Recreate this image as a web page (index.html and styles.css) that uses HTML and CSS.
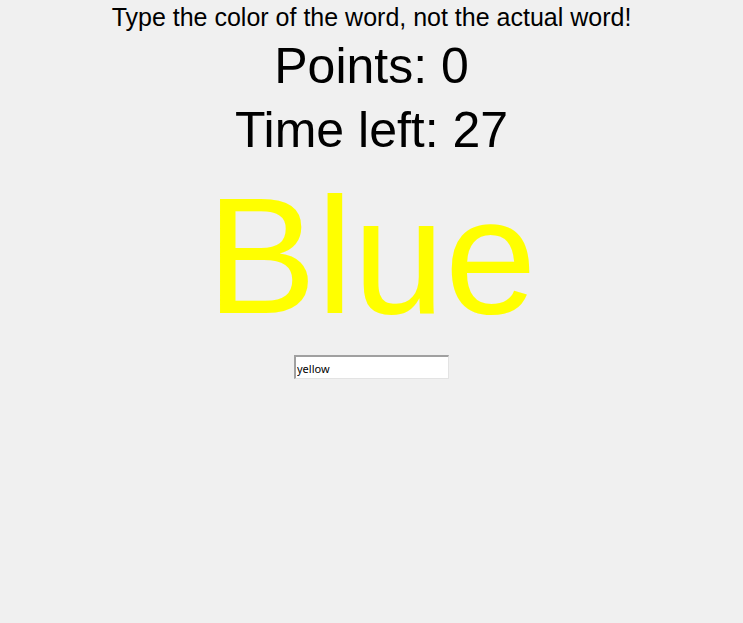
FILE: index.html
```
<!DOCTYPE html>
<html>
<head>
<meta charset="utf-8">
<link rel="stylesheet" href="styles.css">
</head>
<body>
<div class="app">
  <div class="instructions">Type the color of the word, not the actual word!</div>
  <div class="score">Points: 0</div>
  <div class="timer">Time left: 27</div>
  <div class="word">Blue</div>
  <div class="entry-row"><input class="entry" type="text" value="yellow"></div>
</div>
</body>
</html>
```
FILE: styles.css
```
html, body {
  margin: 0;
  padding: 0;
  background: #f0f0f0;
}
.app {
  display: flex;
  flex-direction: column;
  align-items: center;
  width: 743px;
  height: 623px;
  font-family: "Liberation Sans", Arial, sans-serif;
  color: #000;
}
.instructions {
  font-size: 25px;
  line-height: 28px;
  margin-top: 3px;
}
.score {
  font-size: 50px;
  line-height: 58px;
  margin-top: 6px;
}
.timer {
  font-size: 50px;
  line-height: 58px;
  margin-top: 6px;
}
.word {
  font-size: 165px;
  line-height: 184px;
  color: #ffff00;
  margin-top: 5px;
}
.entry-row {
  display: flex;
  justify-content: center;
  margin-top: 7px;
}
.entry {
  box-sizing: border-box;
  width: 155px;
  height: 24px;
  margin: 0;
  padding: 2px 1px 0 1px;
  background: #fff;
  border-style: solid;
  border-width: 2px 1px 1px 2px;
  border-color: #a0a0a0 #e3e3e3 #e3e3e3 #a0a0a0;
  font-family: "Noto Sans", "Liberation Sans", sans-serif;
  font-size: 11px;
  color: #000;
  outline: none;
}
```
